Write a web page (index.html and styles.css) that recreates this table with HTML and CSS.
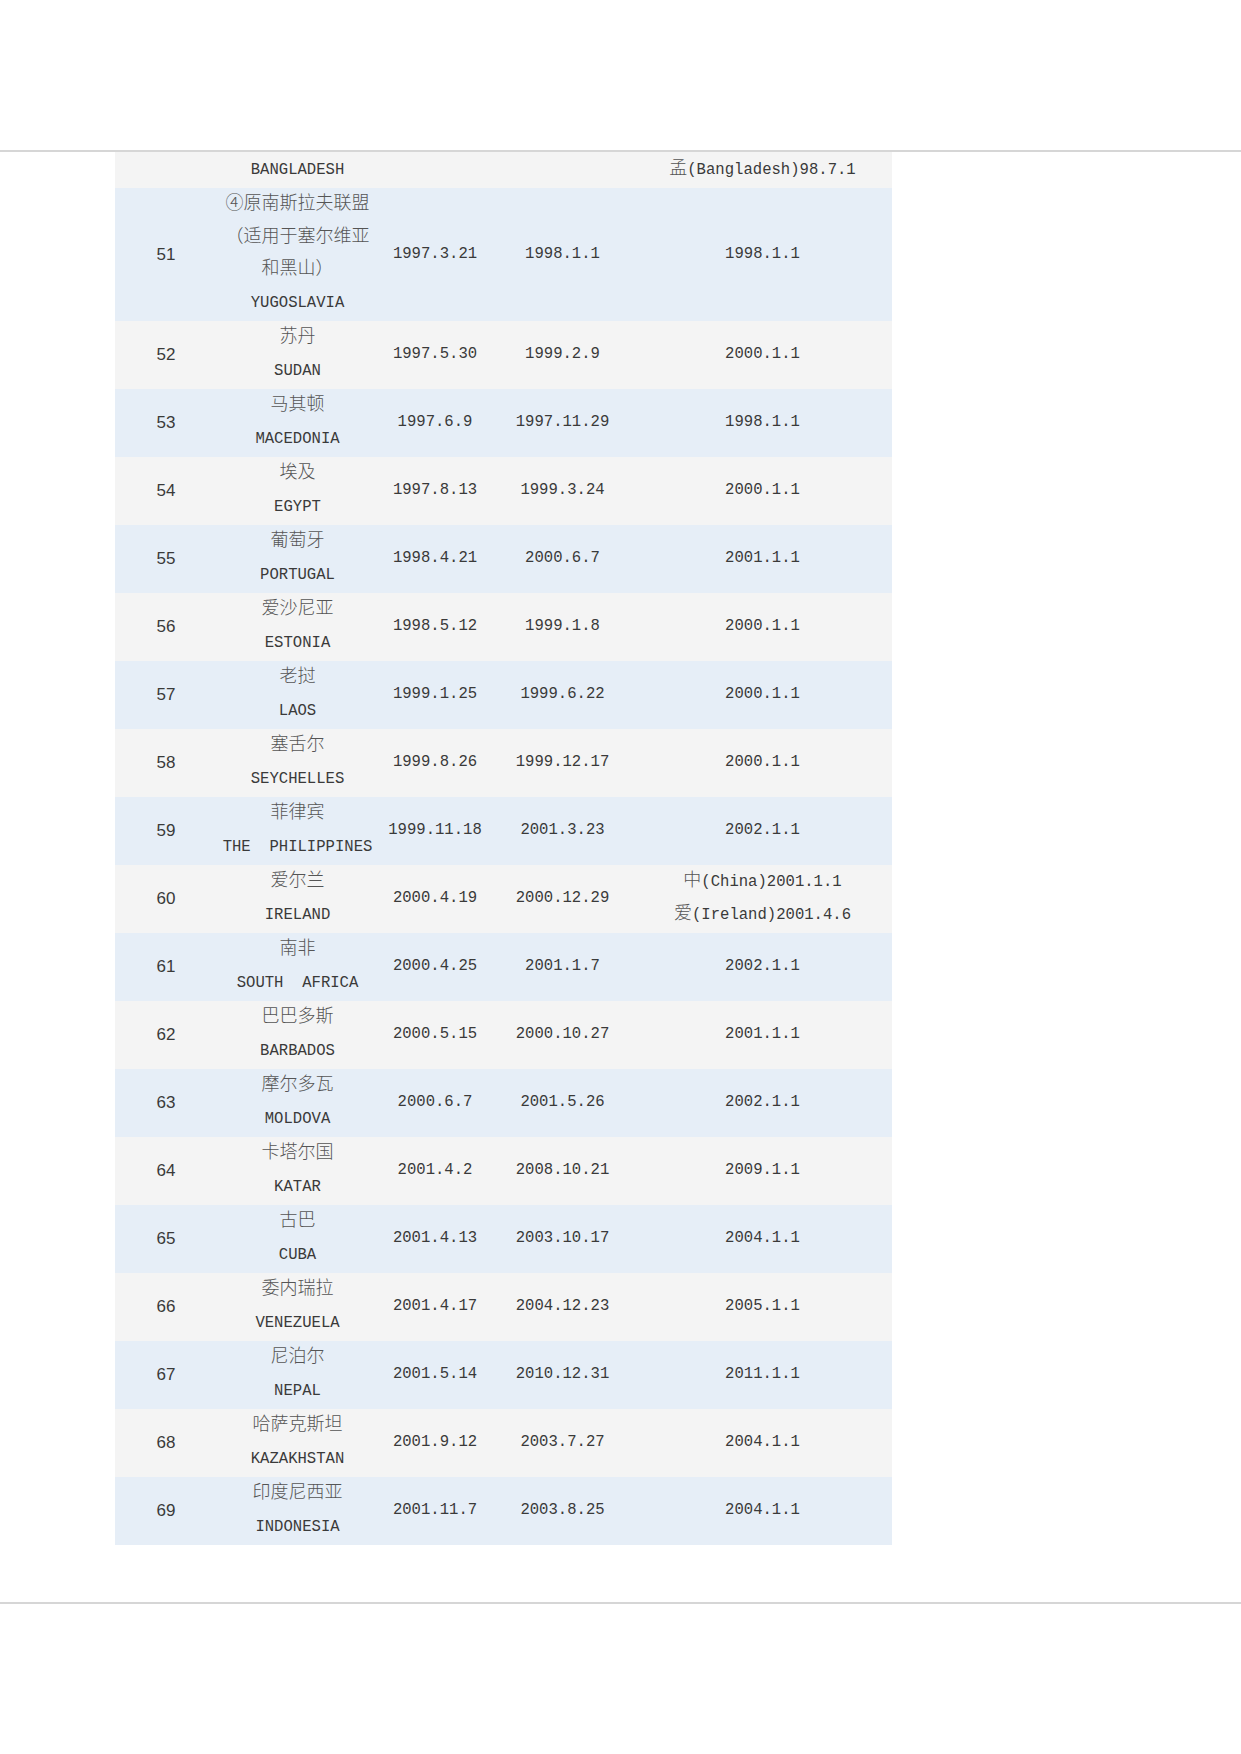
FILE: index.html
```html
<!DOCTYPE html>
<html lang="zh-CN">

<head>
    <meta charset="UTF-8">
    <meta name="viewport" content="width=device-width, initial-scale=1.0">
    <title>双边税收协定一览</title>
    <link rel="stylesheet" href="styles.css">
</head>

<body>

    <div class="page-top"></div>
    <hr class="rule">

    <table class="treaty">
        <colgroup>
            <col class="c-no">
            <col class="c-name">
            <col class="c-sign">
            <col class="c-force">
            <col class="c-exec">
        </colgroup>
        <tbody>
            <tr class="cont">
                <td class="no"></td>
                <td>BANGLADESH</td>
                <td></td>
                <td></td>
                <td><span class="zh">孟</span>(Bangladesh)98.7.1</td>
            </tr>
            <tr>
                <td class="no">51</td>
                <td><span class="zh">④原南斯拉夫联盟<br>（适用于塞尔维亚<br>和黑山）</span><br>YUGOSLAVIA</td>
                <td>1997.3.21</td>
                <td>1998.1.1</td>
                <td>1998.1.1</td>
            </tr>
            <tr>
                <td class="no">52</td>
                <td><span class="zh">苏丹</span><br>SUDAN</td>
                <td>1997.5.30</td>
                <td>1999.2.9</td>
                <td>2000.1.1</td>
            </tr>
            <tr>
                <td class="no">53</td>
                <td><span class="zh">马其顿</span><br>MACEDONIA</td>
                <td>1997.6.9</td>
                <td>1997.11.29</td>
                <td>1998.1.1</td>
            </tr>
            <tr>
                <td class="no">54</td>
                <td><span class="zh">埃及</span><br>EGYPT</td>
                <td>1997.8.13</td>
                <td>1999.3.24</td>
                <td>2000.1.1</td>
            </tr>
            <tr>
                <td class="no">55</td>
                <td><span class="zh">葡萄牙</span><br>PORTUGAL</td>
                <td>1998.4.21</td>
                <td>2000.6.7</td>
                <td>2001.1.1</td>
            </tr>
            <tr>
                <td class="no">56</td>
                <td><span class="zh">爱沙尼亚</span><br>ESTONIA</td>
                <td>1998.5.12</td>
                <td>1999.1.8</td>
                <td>2000.1.1</td>
            </tr>
            <tr>
                <td class="no">57</td>
                <td><span class="zh">老挝</span><br>LAOS</td>
                <td>1999.1.25</td>
                <td>1999.6.22</td>
                <td>2000.1.1</td>
            </tr>
            <tr>
                <td class="no">58</td>
                <td><span class="zh">塞舌尔</span><br>SEYCHELLES</td>
                <td>1999.8.26</td>
                <td>1999.12.17</td>
                <td>2000.1.1</td>
            </tr>
            <tr>
                <td class="no">59</td>
                <td><span class="zh">菲律宾</span><br>THE&nbsp;&nbsp;PHILIPPINES</td>
                <td>1999.11.18</td>
                <td>2001.3.23</td>
                <td>2002.1.1</td>
            </tr>
            <tr>
                <td class="no">60</td>
                <td><span class="zh">爱尔兰</span><br>IRELAND</td>
                <td>2000.4.19</td>
                <td>2000.12.29</td>
                <td><span class="zh">中</span>(China)2001.1.1<br><span class="zh">爱</span>(Ireland)2001.4.6</td>
            </tr>
            <tr>
                <td class="no">61</td>
                <td><span class="zh">南非</span><br>SOUTH&nbsp;&nbsp;AFRICA</td>
                <td>2000.4.25</td>
                <td>2001.1.7</td>
                <td>2002.1.1</td>
            </tr>
            <tr>
                <td class="no">62</td>
                <td><span class="zh">巴巴多斯</span><br>BARBADOS</td>
                <td>2000.5.15</td>
                <td>2000.10.27</td>
                <td>2001.1.1</td>
            </tr>
            <tr>
                <td class="no">63</td>
                <td><span class="zh">摩尔多瓦</span><br>MOLDOVA</td>
                <td>2000.6.7</td>
                <td>2001.5.26</td>
                <td>2002.1.1</td>
            </tr>
            <tr>
                <td class="no">64</td>
                <td><span class="zh">卡塔尔国</span><br>KATAR</td>
                <td>2001.4.2</td>
                <td>2008.10.21</td>
                <td>2009.1.1</td>
            </tr>
            <tr>
                <td class="no">65</td>
                <td><span class="zh">古巴</span><br>CUBA</td>
                <td>2001.4.13</td>
                <td>2003.10.17</td>
                <td>2004.1.1</td>
            </tr>
            <tr>
                <td class="no">66</td>
                <td><span class="zh">委内瑞拉</span><br>VENEZUELA</td>
                <td>2001.4.17</td>
                <td>2004.12.23</td>
                <td>2005.1.1</td>
            </tr>
            <tr>
                <td class="no">67</td>
                <td><span class="zh">尼泊尔</span><br>NEPAL</td>
                <td>2001.5.14</td>
                <td>2010.12.31</td>
                <td>2011.1.1</td>
            </tr>
            <tr>
                <td class="no">68</td>
                <td><span class="zh">哈萨克斯坦</span><br>KAZAKHSTAN</td>
                <td>2001.9.12</td>
                <td>2003.7.27</td>
                <td>2004.1.1</td>
            </tr>
            <tr>
                <td class="no">69</td>
                <td><span class="zh">印度尼西亚</span><br>INDONESIA</td>
                <td>2001.11.7</td>
                <td>2003.8.25</td>
                <td>2004.1.1</td>
            </tr>
        </tbody>
    </table>

    <hr class="rule rule-bottom">

</body>

</html>
```

FILE: styles.css
```css
body {
    margin: 0;
    background: #fff;
    color: #3a3a3a;
    font-family: "Liberation Mono", "Noto Sans CJK SC", monospace;
    font-size: 15.6px;
}

.page-top {
    height: 150px;
}

.rule {
    border: none;
    height: 2px;
    margin: 0;
    background: #d6d6d6;
}

.rule-bottom {
    margin-top: 57px;
}

.treaty {
    margin-left: 115px;
    width: 777px;
    border-collapse: collapse;
    table-layout: fixed;
}

.c-no {
    width: 102px;
}

.c-name {
    width: 161px;
}

.c-sign {
    width: 114px;
}

.c-force {
    width: 141px;
}

.c-exec {
    width: 259px;
}

.treaty td {
    padding: 1.5px 0;
    line-height: 32.5px;
    text-align: center;
    vertical-align: middle;
    white-space: nowrap;
}

.treaty tr:nth-child(odd) {
    background: #f4f4f4;
}

.treaty tr:nth-child(even) {
    background: #e6eef7;
}

.treaty .no {
    font-family: "Liberation Sans", Arial, sans-serif;
    font-size: 17px;
    line-height: 1;
}

.zh {
    font-family: "Noto Sans CJK SC", sans-serif;
    font-size: 18px;
    font-weight: 300;
    line-height: 1;
    color: #555;
}
```
